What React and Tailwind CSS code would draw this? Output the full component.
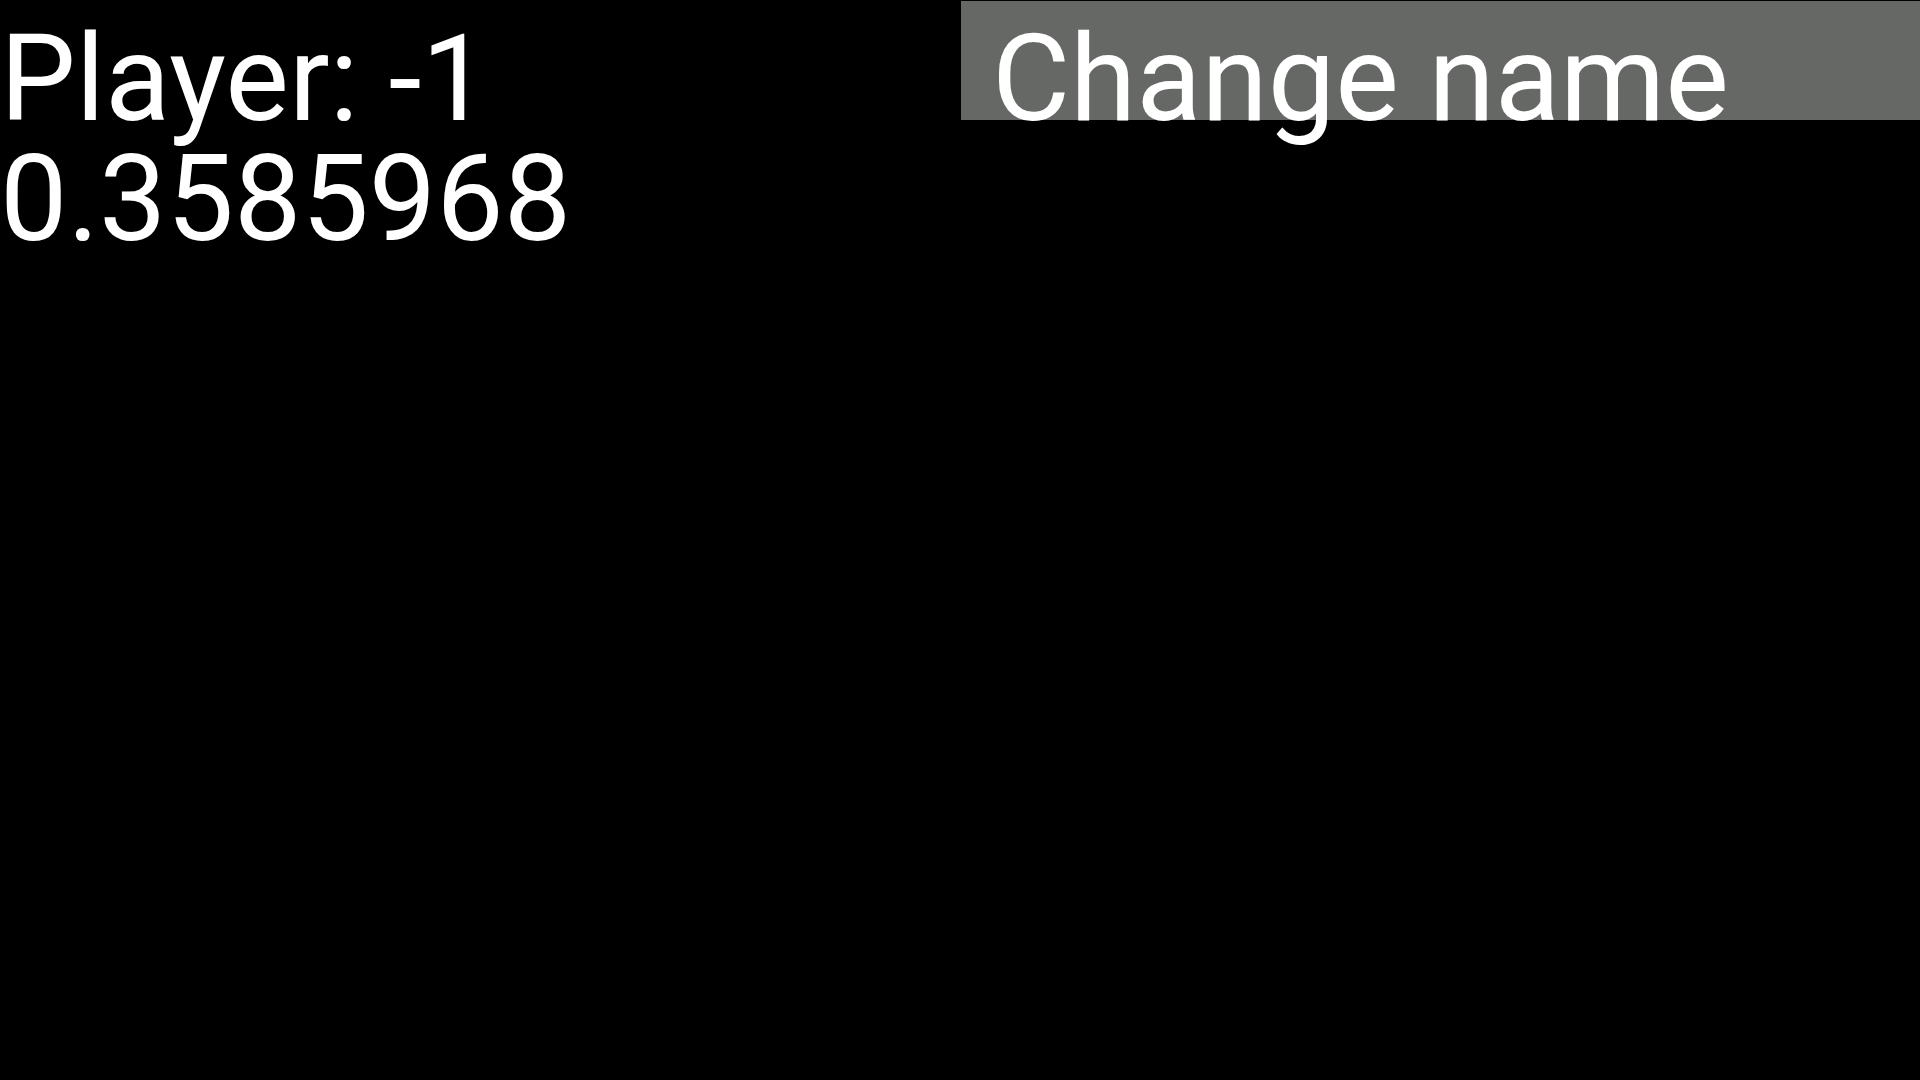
export default function App() {
  return (
    <div className="w-[1920px] h-[1080px] bg-black text-white font-['Roboto',sans-serif] flex items-start overflow-hidden">
      {/* Player info */}
      <div className="w-[961px] shrink-0 pt-[19px] text-[120px] leading-[120px]">
        <div>Player: -1</div>
        <div>0.3585968</div>
      </div>
      {/* Change name button */}
      <div className="flex-1 mt-px h-[119px] bg-[#666865] pl-[31px] pt-[18px] text-[120px] leading-[120px] whitespace-nowrap">
        Change name
      </div>
    </div>
  );
}
